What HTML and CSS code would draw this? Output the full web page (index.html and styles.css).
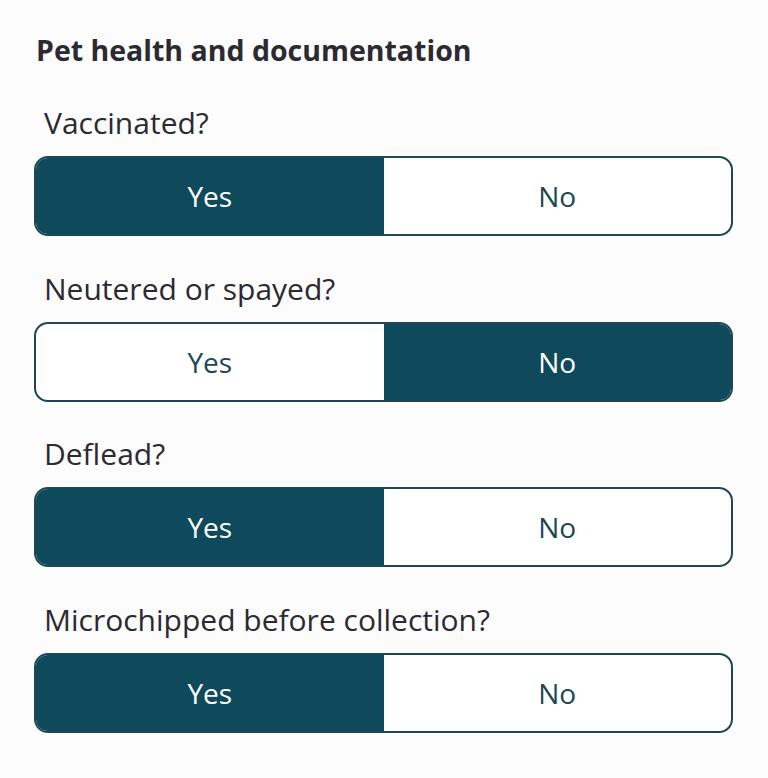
FILE: index.html
```html
<!DOCTYPE html>
<html>
<head>
<meta charset="utf-8">
<link rel="stylesheet" href="styles.css">
</head>
<body>
<main class="page">
  <h1 class="title">Pet health and documentation</h1>
  <section class="group">
    <div class="label">Vaccinated?</div>
    <div class="toggle">
      <div class="opt on">Yes</div>
      <div class="opt">No</div>
    </div>
  </section>
  <section class="group">
    <div class="label">Neutered or spayed?</div>
    <div class="toggle">
      <div class="opt">Yes</div>
      <div class="opt on">No</div>
    </div>
  </section>
  <section class="group">
    <div class="label">Deflead?</div>
    <div class="toggle">
      <div class="opt on">Yes</div>
      <div class="opt">No</div>
    </div>
  </section>
  <section class="group">
    <div class="label">Microchipped before collection?</div>
    <div class="toggle">
      <div class="opt on">Yes</div>
      <div class="opt">No</div>
    </div>
  </section>
</main>
</body>
</html>
```
FILE: styles.css
```css
html, body {
  margin: 0;
  background: #fcfcfd;
}
.page {
  padding: 30px 35px 0 34px;
  font-family: "Open Sans", "Noto Sans", sans-serif;
}
.title {
  margin: 0 0 0 2px;
  font-size: 28.5px;
  line-height: 40px;
  font-weight: 700;
  color: #2c2a31;
}
.group {
  margin-top: 34px;
}
.group + .group {
  margin-top: 33.5px;
}
.label {
  margin-left: 10px;
  font-size: 30px;
  line-height: 38px;
  color: #2c2a31;
  margin-bottom: 14px;
}
.toggle {
  display: grid;
  grid-template-columns: 1fr 1fr;
  height: 80px;
  box-sizing: border-box;
  border: 2px solid #1c4753;
  border-radius: 14px;
  overflow: hidden;
  background: #fff;
}
.opt {
  display: flex;
  align-items: center;
  justify-content: center;
  font-size: 28px;
  color: #1c4753;
}
.opt.on {
  background: #0f4a5c;
  color: #ffffff;
}
```
